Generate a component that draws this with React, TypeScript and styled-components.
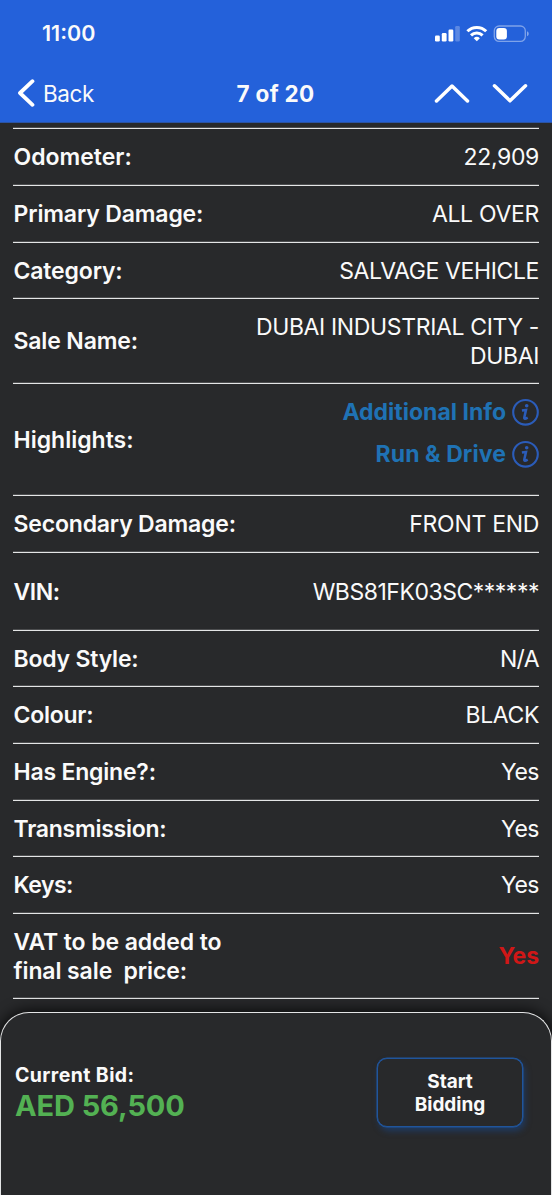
import React from "react";
import styled, { createGlobalStyle } from "styled-components";

const GlobalStyle = createGlobalStyle`
  * { box-sizing: border-box; }
  body {
    margin: 0;
    background: #28292b;
    color: #fafafa;
    font-family: Inter, "Liberation Sans", sans-serif;
  }
`;

const Screen = styled.div`
  display: flex;
  flex-direction: column;
  width: 552px;
  height: 1195px;
  overflow: hidden;
  background: #28292b;
`;

const Header = styled.header`
  flex: none;
  height: 123px;
  background: #2461da;
  border-bottom: 1px solid #2b54a4;
`;

const StatusBar = styled.div`
  display: flex;
  align-items: center;
  justify-content: space-between;
  height: 66px;
  padding: 0 23px 0 42px;
`;

const Clock = styled.span`
  font-size: 21.5px;
  font-weight: 600;
  line-height: 26px;
`;

const StatusIcons = styled.div`
  display: flex;
  align-items: center;
  padding-top: 1px;
`;

const NavBar = styled.nav`
  display: grid;
  grid-template-columns: 1fr auto 1fr;
  align-items: center;
  height: 54px;
  padding: 0 24px 0 17px;
`;

const BackLink = styled.div`
  display: flex;
  align-items: center;
  gap: 8px;
  font-size: 22.5px;
  font-weight: 400;
  letter-spacing: -0.4px;
`;

const Title = styled.h1`
  margin: 0;
  padding-left: 6px;
  font-size: 22.5px;
  font-weight: 700;
  letter-spacing: 0.3px;
`;

const Arrows = styled.div`
  display: flex;
  justify-content: flex-end;
  gap: 22px;
`;

const Details = styled.main`
  flex: none;
  height: 889px;
  padding: 5px 13px 0;
`;

const Row = styled.div<{ $height: number }>`
  display: flex;
  align-items: center;
  justify-content: space-between;
  height: ${(p) => p.$height}px;
  border-top: 1px solid #e4e5e6;
  box-shadow: 0 -1px 0 #4c4d4f;
  padding: 1px 0 0 0.5px;
`;

const Label = styled.span<{ $track: number }>`
  font-size: 23px;
  font-weight: 600;
  line-height: 28.5px;
  letter-spacing: ${(p) => p.$track}px;
  white-space: pre-line;
`;

const Value = styled.span<{ $track: number; $alert?: boolean }>`
  font-size: 23px;
  font-weight: ${(p) => (p.$alert ? 700 : 400)};
  color: ${(p) => (p.$alert ? "#d01717" : "inherit")};
  line-height: 28.5px;
  letter-spacing: ${(p) => p.$track}px;
  text-align: right;
  white-space: pre-line;
`;

const Highlights = styled.div`
  display: flex;
  flex-direction: column;
  align-items: flex-end;
  gap: 14px;
  padding-bottom: 15px;
`;

const Highlight = styled.div<{ $track: number }>`
  display: flex;
  align-items: center;
  gap: 6px;
  color: #1f72b4;
  font-size: 23px;
  font-weight: 700;
  line-height: 28px;
  letter-spacing: ${(p) => p.$track}px;
`;

const EndRule = styled.div`
  height: 1px;
  background: #e4e5e6;
  box-shadow: 0 -1px 0 #4c4d4f;
`;

const BidPanel = styled.footer`
  display: flex;
  flex: 1;
  justify-content: space-between;
  padding: 45px 28px 0 14px;
  border: 1px solid #e4e5e6;
  border-bottom: 0;
  border-radius: 29px 29px 0 0;
  background: #28292b;
  box-shadow: 0 0 14px 2px rgba(0, 0, 0, 0.75);
`;

const Bid = styled.div`
  display: flex;
  flex-direction: column;
  padding-top: 4px;
`;

const BidLabel = styled.span`
  font-size: 19.5px;
  font-weight: 700;
  line-height: 26px;
  letter-spacing: 0.4px;
`;

const BidAmount = styled.strong`
  color: #53b153;
  font-size: 29px;
  font-weight: 700;
  line-height: 35px;
  letter-spacing: -0.1px;
`;

const BidButton = styled.button`
  width: 146px;
  height: 69px;
  padding: 0 30px;
  border: 1px solid #20559c;
  border-radius: 10px;
  background: #28292b;
  box-shadow: 0 0 0 0.5px #20559c, 2px 4px 6px rgba(25, 70, 135, 0.6);
  color: #fafafa;
  font: 700 19px/23px Inter, sans-serif;
`;

const InfoIcon = () => (
  <svg width="27" height="28" viewBox="0 0 27 28" fill="none">
    <circle cx="13.5" cy="14.3" r="12.3" stroke="#2b5cb9" strokeWidth="2.1" />
    <circle cx="14.7" cy="7.8" r="1.8" fill="#2b5cb9" />
    <path d="M9.9 12.5l4.1-.6-1.7 7.5c-.3 1.8 1 1.5 3.4.2" stroke="#2b5cb9" strokeWidth="2.5" />
  </svg>
);

const rows = [
  { label: "Odometer:", value: "22,909", height: 57, lt: 0, vt: -0.35 },
  { label: "Primary Damage:", value: "ALL OVER", height: 57, lt: -0.15, vt: -0.32 },
  { label: "Category:", value: "SALVAGE VEHICLE", height: 56, lt: -0.15, vt: -0.38 },
  { label: "Sale Name:", value: "DUBAI INDUSTRIAL CITY -\nDUBAI", height: 85, lt: -0.15, vt: -0.36 },
  { label: "Highlights:", highlights: true, height: 112, lt: 0, vt: 0 },
  { label: "Secondary Damage:", value: "FRONT END", height: 57, lt: -0.18, vt: -0.3 },
  { label: "VIN:", value: "WBS81FK03SC******", height: 78, lt: -0.4, vt: -0.48 },
  { label: "Body Style:", value: "N/A", height: 56, lt: -0.2, vt: -0.6 },
  { label: "Colour:", value: "BLACK", height: 57, lt: -0.25, vt: -0.4 },
  { label: "Has Engine?:", value: "Yes", height: 57, lt: -0.2, vt: -0.5 },
  { label: "Transmission:", value: "Yes", height: 56, lt: -0.25, vt: -0.5 },
  { label: "Keys:", value: "Yes", height: 57, lt: -0.5, vt: -0.5 },
  { label: "VAT to be added to\nfinal sale \u00a0price:", value: "Yes", alert: true, height: 85, lt: -0.1, vt: -0.1 },
];

export default function App() {
  return (
    <Screen>
      <GlobalStyle />
      <Header>
        <StatusBar>
          <Clock>11:00</Clock>
          <StatusIcons>
            <svg width="94" height="18" viewBox="0 0 94 18" fill="none">
              <g fill="#fff">
                <rect x="0" y="10.5" width="4.8" height="6" rx="1.2" />
                <rect x="6.8" y="8" width="4.8" height="8.5" rx="1.2" />
                <rect x="13.5" y="4.5" width="4.8" height="12" rx="1.2" />
                <rect x="20.2" y="1" width="4.6" height="15.5" rx="1.2" opacity="0.25" />
              </g>
              <g stroke="#fff" strokeWidth="3">
                <path d="M32.4 6.3a13.4 13.4 0 0 1 18.8 0" />
                <path d="M36 10.4a8.3 8.3 0 0 1 11.6 0" />
              </g>
              <path d="M38.7 13.2a4.6 4.6 0 0 1 6.2 0L41.8 16.3z" fill="#fff" />
              <rect x="59.3" y="1" width="31" height="15.4" rx="4.8" stroke="#fff" strokeOpacity="0.42" strokeWidth="1.3" />
              <rect x="61.3" y="3" width="10.6" height="11.4" rx="3" fill="#fff" />
              <path d="M92 6.3c2.3.9 2.3 4.1 0 5z" fill="#fff" opacity="0.45" />
            </svg>
          </StatusIcons>
        </StatusBar>
        <NavBar>
          <BackLink>
            <svg width="18" height="28" viewBox="0 0 18 28" fill="none">
              <path d="M15.5 2.2L3 14L15.5 25.8" stroke="#fff" strokeWidth="3.8" strokeLinecap="round" strokeLinejoin="round" />
            </svg>
            Back
          </BackLink>
          <Title>7 of 20</Title>
          <Arrows>
            <svg width="36" height="20" viewBox="0 0 36 20" fill="none">
              <path d="M2.5 18L18 3L33.5 18" stroke="#fff" strokeWidth="3.5" strokeLinecap="round" strokeLinejoin="round" />
            </svg>
            <svg width="36" height="20" viewBox="0 0 36 20" fill="none">
              <path d="M2.5 2.8L18 17.8L33.5 2.8" stroke="#fff" strokeWidth="3.5" strokeLinecap="round" strokeLinejoin="round" />
            </svg>
          </Arrows>
        </NavBar>
      </Header>
      <Details>
        {rows.map((row) => (
          <Row key={row.label} $height={row.height}>
            <Label $track={row.lt}>{row.label}</Label>
            {row.highlights ? (
              <Highlights>
                <Highlight $track={0}>
                  Additional Info <InfoIcon />
                </Highlight>
                <Highlight $track={0.08}>
                  Run &amp; Drive <InfoIcon />
                </Highlight>
              </Highlights>
            ) : (
              <Value $track={row.vt} $alert={row.alert}>
                {row.value}
              </Value>
            )}
          </Row>
        ))}
        <EndRule />
      </Details>
      <BidPanel>
        <Bid>
          <BidLabel>Current Bid:</BidLabel>
          <BidAmount>AED 56,500</BidAmount>
        </Bid>
        <BidButton>Start Bidding</BidButton>
      </BidPanel>
    </Screen>
  );
}
